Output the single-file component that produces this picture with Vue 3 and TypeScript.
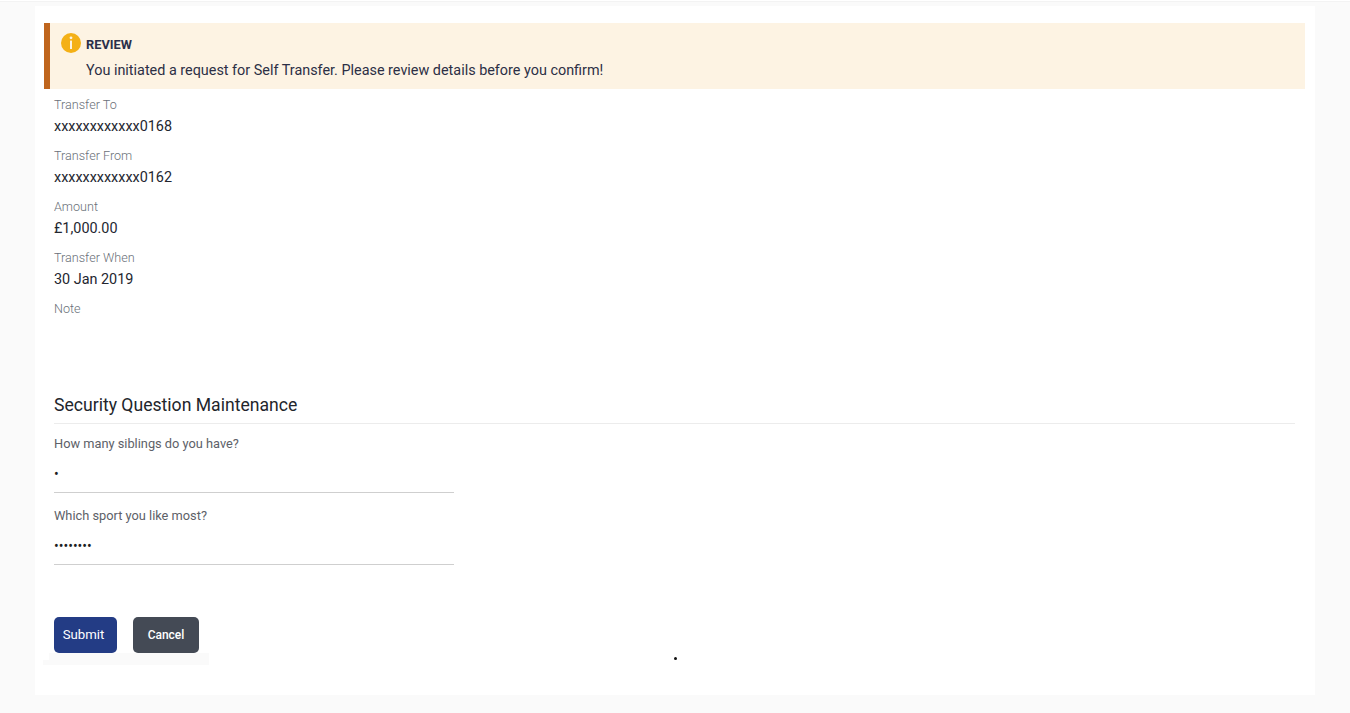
<script setup lang="ts">
const details: { label: string; value: string }[] = [
  { label: 'Transfer To', value: 'xxxxxxxxxxxx0168' },
  { label: 'Transfer From', value: 'xxxxxxxxxxxx0162' },
  { label: 'Amount', value: '£1,000.00' },
  { label: 'Transfer When', value: '30 Jan 2019' },
  { label: 'Note', value: '' },
]
const questions: { label: string; answer: string }[] = [
  { label: 'How many siblings do you have?', answer: '1' },
  { label: 'Which sport you like most?', answer: 'football' },
]
</script>

<template>
  <div class="page">
    <div class="topline"></div>
    <main class="card">
      <section class="alert">
        <svg class="info" width="20" height="20" viewBox="0 0 20 20" aria-hidden="true">
          <circle cx="10" cy="10" r="10" fill="#f4b016" />
          <circle cx="10" cy="4.8" r="1.4" fill="#fdf3e3" />
          <rect x="9" y="7.6" width="2" height="8.4" fill="#fdf3e3" />
        </svg>
        <div>
          <div class="alert-title">REVIEW</div>
          <div class="alert-text">You initiated a request for Self Transfer. Please review details before you confirm!</div>
        </div>
      </section>

      <dl class="details">
        <div v-for="d in details" :key="d.label" class="detail">
          <dt>{{ d.label }}</dt>
          <dd>{{ d.value }}</dd>
        </div>
      </dl>

      <h2 class="heading">Security Question Maintenance</h2>

      <form class="form" @submit.prevent>
        <label v-for="q in questions" :key="q.label" class="field">
          <span>{{ q.label }}</span>
          <input type="password" :value="q.answer" readonly />
        </label>
        <div class="actions">
          <button class="btn submit" type="button">Submit</button>
          <button class="btn cancel" type="button">Cancel</button>
        </div>
      </form>
      <div class="strip-a"></div>
      <div class="strip-b"></div>
      <i class="dot"></i>
    </main>
  </div>
</template>

<style>
html, body { margin: 0; background: #fafafa; }
</style>

<style scoped>
.page {
  height: 713px;
  box-sizing: border-box;
  overflow: hidden;
  background: #fafafa;
  font-family: Roboto, "Liberation Sans", sans-serif;
}
.topline { height: 2px; margin-bottom: 4px; background: #f3f3f3; border-top: 1px solid #fff; box-sizing: border-box; }
.card {
  position: relative;
  box-sizing: border-box;
  height: 689px;
  margin: 0 35px;
  padding-top: 17px;
  background: #fff;
}
.alert {
  display: flex;
  gap: 5px;
  box-sizing: border-box;
  height: 66px;
  margin: 0 10px 0 9px;
  padding: 10px 0 0 11px;
  background: #fdf3e3;
  border-left: 6px solid #bf651d;
}
.info { flex: none; }
.alert-title { margin-top: 4px; font-size: 12.8px; line-height: 16px; font-weight: 700; color: #2b2f4a; }
.alert-text { margin-top: 8px; font-size: 14.4px; line-height: 20px; color: #2c2f45; }
.details { margin: 6px 0 0 19px; }
.detail { height: 51px; }
dt { font-size: 12.6px; line-height: 20px; color: #6a7078; font-weight: 300; }
dd { margin: 0; font-size: 14.4px; line-height: 24px; color: #23262f; }
.heading {
  margin: 42px 20px 0 19px;
  padding-bottom: 5px;
  font-size: 17.6px;
  line-height: 26px;
  font-weight: 400;
  color: #22252b;
  border-bottom: 1px solid #ececec;
}
.form { margin: 10px 0 0 19px; }
.field { display: block; width: 400px; height: 72px; }
.field span { display: block; font-size: 12.8px; line-height: 20px; color: #5d6168; }
.field input {
  display: block;
  box-sizing: border-box;
  width: 100%;
  height: 39px;
  padding: 2px 0 0;
  border: 0;
  border-bottom: 1px solid #cfcfcf;
  outline: 0;
  background: transparent;
  font: 400 14px Roboto, sans-serif;
  color: #1d1f24;
}
.actions { display: flex; gap: 16px; margin-top: 39px; }
.btn {
  height: 36px;
  border: 0;
  border-radius: 5px;
  color: #fff;
  font-family: Roboto, sans-serif;
  padding: 0;
}
.submit { width: 63px; padding: 0 4px 2px 0; background: #233c85; font-size: 13.2px; font-weight: 400; }
.cancel { width: 66px; background: #444a55; font-size: 12px; font-weight: 500; }
.strip-a { height: 7px; margin-left: 14px; width: 160px; background: #fafafa; }
.strip-b { height: 5px; margin-left: 8px; width: 166px; background: #fafafa; }
.dot {
  position: absolute;
  left: 639px;
  top: 651px;
  width: 3px;
  height: 3px;
  border-radius: 50%;
  background: #111;
}
</style>
